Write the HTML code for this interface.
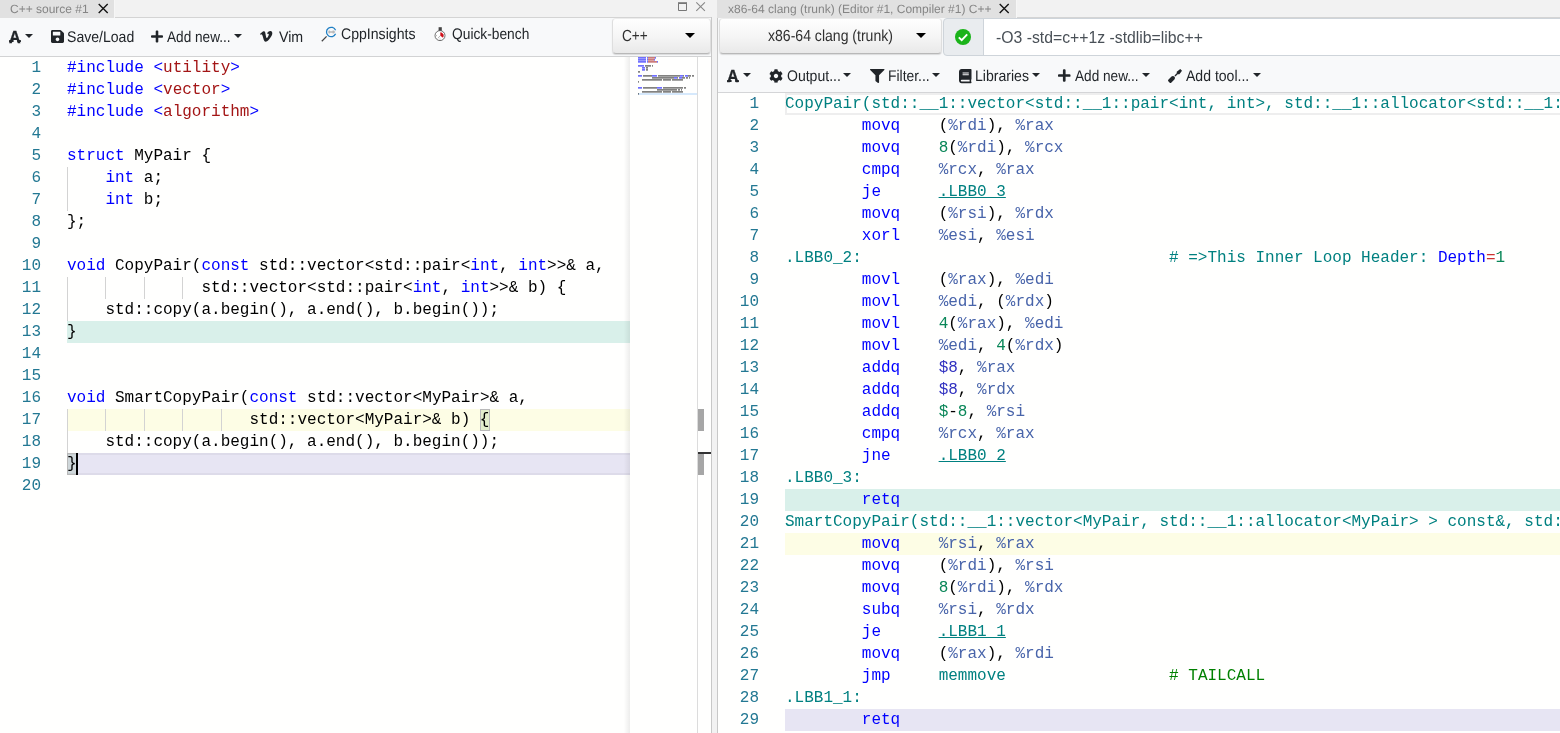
<!DOCTYPE html>
<html lang="en"><head><meta charset="utf-8"><title>Compiler Explorer</title>
<style>
*{box-sizing:border-box;margin:0;padding:0}
html,body{width:1560px;height:733px;overflow:hidden;background:#f2f2f2}
body{will-change:transform;font-family:"Liberation Sans",sans-serif;color:#212529;position:relative}
.abs{position:absolute}
svg{position:absolute;overflow:visible}
#lp{position:absolute;left:0;top:0;width:712px;height:733px;overflow:hidden}
#lp:after{content:"";position:absolute;left:711px;top:17px;width:1px;bottom:0;background:#c8c8c8}
#rp:before{content:"";position:absolute;left:-1px;top:18px;width:1px;bottom:0;background:#c8c8c8}
#rp{position:absolute;left:718px;top:0;width:842px;height:733px}
.hdr{position:absolute;left:0;top:0;right:0;height:18px;background:#f2f2f2}
.tab{position:absolute;left:0;top:0;height:18px;background:#e1e1e1;color:#858585;font-size:12px;line-height:18px;white-space:nowrap}
.hdr:after{content:"";position:absolute;left:0;right:0;top:17px;height:1px;background:#d4d4d4}
.tab{z-index:1;border-right:1px solid #f6f6f6}
.tab .tt{position:absolute;left:10px;top:-.4px;text-rendering:geometricPrecision}
.tb{position:absolute;left:0;right:0;background:#f8f9fa}
.lbl{position:absolute;white-space:nowrap;text-rendering:geometricPrecision;font-size:15.4px;line-height:20px;transform-origin:0 50%;color:#212529}
.caret{position:absolute;width:0;height:0;border-left:4px solid transparent;border-right:4px solid transparent;border-top:4.5px solid #212529}
.fa-a{position:absolute;font-family:"Liberation Sans",sans-serif;font-weight:bold;font-size:17.500px;line-height:20px;color:#212529;text-rendering:geometricPrecision;transform-origin:0 50%;transform:scaleX(.92);-webkit-text-stroke:.35px #212529}
.fa-a:before,.fa-a:after{content:"";position:absolute;top:13.900px;height:1.900px;width:4.800px;background:#212529;border-radius:.5px}
.fa-a:before{left:-.2px}.fa-a:after{left:8.700px}
.pick{position:absolute;border:1px solid #dedede;border-top-color:#ececec;border-bottom-color:#b8b8b8;border-radius:4px;background:linear-gradient(#fefefe,#f6f6f6 50%,#e9e9e9);box-shadow:0 1px 1px rgba(0,0,0,.12);font-size:14px;line-height:20px;color:#303030;white-space:nowrap}
.pick .caret{border-left-width:5.5px;border-right-width:5.5px;border-top:5.5px solid #000}
.pt{position:absolute;text-rendering:geometricPrecision;font-size:16px;line-height:20px;transform-origin:0 50%;white-space:nowrap}
.ed{position:absolute;left:0;right:0;bottom:0;background:#fffffe;overflow:hidden;font-family:"Liberation Mono",monospace;font-size:16px;line-height:22px}
.ln{position:absolute;left:0;text-align:right;color:#237893;height:22px;white-space:pre}
.cl{position:absolute;height:22px;white-space:pre;color:#000}
.ln{width:41px}
.cl{left:67px}
.k{color:#0000ff}.s{color:#a31515}.t{color:#008080}.r{color:#4864aa}.n{color:#098658}.c{color:#008000}.u{color:#008080;text-decoration:underline}.h{color:#3030c0}.e{color:#cd3131}
.hl{position:absolute;height:22px;left:67px;right:0}
.ig{position:absolute;width:1px;height:22px;background:#d3d3d3}
.cur{border:2px solid #eee}
</style></head><body>

<div id="lp">
 <div class="hdr">
  <div class="tab" style="width:115px"><span class="tt">C++ source #1</span>
   <svg style="left:97px;top:3px" width="12" height="12" viewBox="0 0 12 12"><path d="M1.700 1L10.700 10M10.700 1L1.700 10" stroke="#111" stroke-width="1.350" fill="none"/></svg>
  </div>
  <svg style="left:677px;top:1px" width="12" height="12" viewBox="0 0 12 12"><path d="M1.5 2.5H9.5V9.5H1.5Z" stroke="#777" stroke-width="1" fill="none"/><path d="M1 2H10" stroke="#777" stroke-width="1.6"/></svg>
  <svg style="left:694px;top:0px" width="14" height="14" viewBox="0 0 14 14"><path d="M2.300 2.300L10.900 10.900M10.900 2.300L2.300 10.900" stroke="#888" stroke-width="1.100" fill="none"/></svg>
 </div>
 <div class="tb" style="top:18px;height:39px;width:711px;border-bottom:1px solid #d2d3d4">
  <span class="fa-a" style="left:9px;top:8.600px">A</span>
  <i class="caret" style="left:25px;top:16px"></i>
  <svg style="left:51px;top:12px" width="13" height="13" viewBox="0 32 448 448"><path fill="#212529" d="M433.941 129.941l-83.882-83.882A48 48 0 0 0 316.118 32H48C21.49 32 0 53.49 0 80v352c0 26.51 21.49 48 48 48h352c26.51 0 48-21.49 48-48V163.882a48 48 0 0 0-14.059-33.941zM224 416c-35.346 0-64-28.654-64-64 0-35.346 28.654-64 64-64s64 28.654 64 64c0 35.346-28.654 64-64 64zm96-304.52V212c0 6.627-5.373 12-12 12H76c-6.627 0-12-5.373-12-12V108c0-6.627 5.373-12 12-12h228.52c3.183 0 6.235 1.264 8.485 3.515l3.48 3.48A11.996 11.996 0 0 1 320 111.48z"/></svg>
  <span class="lbl" style="left:67px;top:10px;transform:scaleX(0.914)">Save/Load</span>
  <svg style="left:151px;top:12px" width="12" height="13" viewBox="0 32 448 448"><path fill="#212529" d="M416 208H272V64c0-17.67-14.33-32-32-32h-32c-17.67 0-32 14.33-32 32v144H32c-17.67 0-32 14.33-32 32v32c0 17.67 14.33 32 32 32h144v144c0 17.67 14.33 32 32 32h32c17.67 0 32-14.33 32-32V304h144c17.67 0 32-14.33 32-32v-32c0-17.67-14.33-32-32-32z"/></svg>
  <span class="lbl" style="left:167px;top:10px;transform:scaleX(0.885)">Add new...</span>
  <i class="caret" style="left:234px;top:16px"></i>
  <svg style="left:259.500px;top:13px" width="12.300" height="11" viewBox="0 69 448 383"><path fill="#212529" d="M447.8 153.6c-2 43.6-32.4 103.3-91.4 179.1-60.900 79.200-112.400 118.800-154.600 118.800-26.100 0-48.200-24.100-66.300-72.300C100.300 250 85.300 174.300 56.200 174.300c-3.400 0-15.100 7.100-35.200 21.100L0 168.200c51.600-45.300 100.900-95.700 131.800-98.500 34.900-3.400 56.300 20.500 64.400 71.500 28.700 181.500 41.400 208.900 93.600 126.700 18.700-29.600 28.800-52.100 30.200-67.600 4.800-45.900-35.800-42.800-63.300-31 22-72.100 64.100-107.100 126.200-105.100 45.800 1.200 67.500 31.100 64.900 89.400z"/></svg>
  <span class="lbl" style="left:279px;top:10px;transform:scaleX(0.923)">Vim</span>
  <svg style="left:320.400px;top:7.400px" width="18" height="18" viewBox="0 0 18 18"><path d="M6.6 11.4L1.8 16.2" stroke="#444" stroke-width="1.3" fill="none"/><path d="M15.560 5.240A4.700 4.700 0 1 0 15.560 8.760" stroke="#1f7fc4" stroke-width="1.300" fill="none"/><path d="M9.200 5.600v2.800M13.200 5.600v2.800" stroke="#777" stroke-width=".8" fill="none"/><path d="M8.600 7h6.500" stroke="#bbb" stroke-width="1.600" fill="none"/></svg>
  <span class="lbl" style="left:341px;top:7px;transform:scaleX(0.916)">CppInsights</span>
  <svg style="left:432px;top:8px" width="16" height="16" viewBox="0 0 16 16"><rect x="6.600" y="1.200" width="3.200" height="3.800" fill="#444"/><circle cx="8" cy="9.600" r="5" fill="#fff" stroke="#333" stroke-width=".7"/><path d="M8.300 9.800V6.300A3.500 3.500 0 0 1 11 11.800Z" fill="#d1101a"/><path d="M8 9.800L6 12.300M4 9.600h1M8 13.600v-1M12 9.600h-.8" stroke="#666" stroke-width=".5"/></svg>
  <span class="lbl" style="left:452px;top:7px;transform:scaleX(0.895)">Quick-bench</span>
  <div class="pick" style="left:611.500px;top:0;width:99px;height:36px"><span class="pt" style="left:9.500px;top:7.500px;transform:scaleX(.852)">C++</span><i class="caret" style="left:72.500px;top:14px"></i></div>
 </div>
 <div class="ed" id="le" style="top:57px;width:711px">
  <div class="hl" style="top:264px;background:#d9f0ea;right:81px"></div>
  <div class="hl" style="top:352px;background:#fdfde5;right:81px"></div>
  <div class="hl" style="top:396px;background:#e7e5f3;right:81px;border-top:2px solid #dddbe9;border-bottom:2px solid #dddbe9"></div>
  <i class="ig" style="left:67px;top:110px"></i><i class="ig" style="left:67px;top:132px"></i><i class="ig" style="left:67px;top:220px"></i><i class="ig" style="left:105px;top:220px"></i><i class="ig" style="left:144px;top:220px"></i><i class="ig" style="left:182px;top:220px"></i><i class="ig" style="left:67px;top:242px"></i><i class="ig" style="left:67px;top:352px"></i><i class="ig" style="left:105px;top:352px"></i><i class="ig" style="left:144px;top:352px"></i><i class="ig" style="left:182px;top:352px"></i><i class="ig" style="left:221px;top:352px"></i><i class="ig" style="left:67px;top:374px"></i>
  <div class="abs" style="left:480px;top:352px;width:10px;height:22px;background:rgba(0,100,0,.1);border:1px solid #b9b9b9"></div>
  <div class="abs" style="left:67px;top:396px;width:10px;height:22px;background:rgba(0,100,0,.1);border:1px solid #b9b9b9"></div>
  <div class="abs" style="left:76px;top:396px;width:2px;height:22px;background:#000"></div>
<div class="ln" style="top:0px">1</div><div class="cl" style="top:0px"><span class="k">#include </span><span class="k">&lt;</span><span class="s">utility</span><span class="k">&gt;</span></div>
<div class="ln" style="top:22px">2</div><div class="cl" style="top:22px"><span class="k">#include </span><span class="k">&lt;</span><span class="s">vector</span><span class="k">&gt;</span></div>
<div class="ln" style="top:44px">3</div><div class="cl" style="top:44px"><span class="k">#include </span><span class="k">&lt;</span><span class="s">algorithm</span><span class="k">&gt;</span></div>
<div class="ln" style="top:66px">4</div><div class="cl" style="top:66px"></div>
<div class="ln" style="top:88px">5</div><div class="cl" style="top:88px"><span class="k">struct</span> MyPair {</div>
<div class="ln" style="top:110px">6</div><div class="cl" style="top:110px">    <span class="k">int</span> a;</div>
<div class="ln" style="top:132px">7</div><div class="cl" style="top:132px">    <span class="k">int</span> b;</div>
<div class="ln" style="top:154px">8</div><div class="cl" style="top:154px">};</div>
<div class="ln" style="top:176px">9</div><div class="cl" style="top:176px"></div>
<div class="ln" style="top:198px">10</div><div class="cl" style="top:198px"><span class="k">void</span> CopyPair(<span class="k">const</span> std::vector&lt;std::pair&lt;<span class="k">int</span>, <span class="k">int</span>&gt;&gt;&amp; a,</div>
<div class="ln" style="top:220px">11</div><div class="cl" style="top:220px">              std::vector&lt;std::pair&lt;<span class="k">int</span>, <span class="k">int</span>&gt;&gt;&amp; b) {</div>
<div class="ln" style="top:242px">12</div><div class="cl" style="top:242px">    std::copy(a.begin(), a.end(), b.begin());</div>
<div class="ln" style="top:264px">13</div><div class="cl" style="top:264px">}</div>
<div class="ln" style="top:286px">14</div><div class="cl" style="top:286px"></div>
<div class="ln" style="top:308px">15</div><div class="cl" style="top:308px"></div>
<div class="ln" style="top:330px">16</div><div class="cl" style="top:330px"><span class="k">void</span> SmartCopyPair(<span class="k">const</span> std::vector&lt;MyPair&gt;&amp; a,</div>
<div class="ln" style="top:352px">17</div><div class="cl" style="top:352px">                   std::vector&lt;MyPair&gt;&amp; b) {</div>
<div class="ln" style="top:374px">18</div><div class="cl" style="top:374px">    std::copy(a.begin(), a.end(), b.begin());</div>
<div class="ln" style="top:396px">19</div><div class="cl" style="top:396px">}</div>
<div class="ln" style="top:418px">20</div><div class="cl" style="top:418px"></div>
  <div class="abs" style="left:623px;top:0;width:7px;height:676px;background:linear-gradient(90deg,rgba(0,0,0,0) 10%,rgba(0,0,0,.07))"></div>
  <div class="abs" style="left:630px;top:0;width:67px;height:676px;background:#fffffe"></div>
  <svg style="left:638px;top:0" width="60" height="60" viewBox="0 0 60 60"><rect x="0" y="36" width="59" height="2" fill="#d6e9fc" shape-rendering="crispEdges"/><rect x="0" y="0.3" width="8" height="1.200" fill="#0000ff" opacity=".8"/><rect x="9" y="0.3" width="1" height="1.200" fill="#0000ff" opacity=".8"/><rect x="10" y="0.3" width="7" height="1.200" fill="#a31515" opacity=".8"/><rect x="17" y="0.3" width="1" height="1.200" fill="#0000ff" opacity=".8"/><rect x="0" y="2.3" width="8" height="1.200" fill="#0000ff" opacity=".8"/><rect x="9" y="2.3" width="1" height="1.200" fill="#0000ff" opacity=".8"/><rect x="10" y="2.3" width="6" height="1.200" fill="#a31515" opacity=".8"/><rect x="16" y="2.3" width="1" height="1.200" fill="#0000ff" opacity=".8"/><rect x="0" y="4.3" width="8" height="1.200" fill="#0000ff" opacity=".8"/><rect x="9" y="4.3" width="1" height="1.200" fill="#0000ff" opacity=".8"/><rect x="10" y="4.3" width="9" height="1.200" fill="#a31515" opacity=".8"/><rect x="19" y="4.3" width="1" height="1.200" fill="#0000ff" opacity=".8"/><rect x="0" y="8.3" width="6" height="1.200" fill="#0000ff" opacity=".8"/><rect x="7" y="8.3" width="6" height="1.200" fill="#000000" opacity=".7"/><rect x="14" y="8.3" width="1" height="1.200" fill="#000000" opacity=".7"/><rect x="4" y="10.3" width="3" height="1.200" fill="#0000ff" opacity=".8"/><rect x="8" y="10.3" width="2" height="1.200" fill="#000000" opacity=".7"/><rect x="4" y="12.3" width="3" height="1.200" fill="#0000ff" opacity=".8"/><rect x="8" y="12.3" width="2" height="1.200" fill="#000000" opacity=".7"/><rect x="0" y="14.3" width="2" height="1.200" fill="#000000" opacity=".7"/><rect x="0" y="18.3" width="4" height="1.200" fill="#0000ff" opacity=".8"/><rect x="5" y="18.3" width="9" height="1.200" fill="#000000" opacity=".7"/><rect x="14" y="18.3" width="5" height="1.200" fill="#0000ff" opacity=".8"/><rect x="20" y="18.3" width="22" height="1.200" fill="#000000" opacity=".7"/><rect x="42" y="18.3" width="3" height="1.200" fill="#0000ff" opacity=".8"/><rect x="45" y="18.3" width="1" height="1.200" fill="#000000" opacity=".7"/><rect x="47" y="18.3" width="3" height="1.200" fill="#0000ff" opacity=".8"/><rect x="50" y="18.3" width="3" height="1.200" fill="#000000" opacity=".7"/><rect x="54" y="18.3" width="2" height="1.200" fill="#000000" opacity=".7"/><rect x="14" y="20.3" width="22" height="1.200" fill="#000000" opacity=".7"/><rect x="36" y="20.3" width="3" height="1.200" fill="#0000ff" opacity=".8"/><rect x="39" y="20.3" width="1" height="1.200" fill="#000000" opacity=".7"/><rect x="41" y="20.3" width="3" height="1.200" fill="#0000ff" opacity=".8"/><rect x="44" y="20.3" width="3" height="1.200" fill="#000000" opacity=".7"/><rect x="48" y="20.3" width="2" height="1.200" fill="#000000" opacity=".7"/><rect x="51" y="20.3" width="1" height="1.200" fill="#000000" opacity=".7"/><rect x="4" y="22.3" width="20" height="1.200" fill="#000000" opacity=".7"/><rect x="25" y="22.3" width="8" height="1.200" fill="#000000" opacity=".7"/><rect x="34" y="22.3" width="11" height="1.200" fill="#000000" opacity=".7"/><rect x="0" y="24.3" width="1" height="1.200" fill="#000000" opacity=".7"/><rect x="0" y="30.3" width="4" height="1.200" fill="#0000ff" opacity=".8"/><rect x="5" y="30.3" width="14" height="1.200" fill="#000000" opacity=".7"/><rect x="19" y="30.3" width="5" height="1.200" fill="#0000ff" opacity=".8"/><rect x="25" y="30.3" width="20" height="1.200" fill="#000000" opacity=".7"/><rect x="46" y="30.3" width="2" height="1.200" fill="#000000" opacity=".7"/><rect x="19" y="32.3" width="20" height="1.200" fill="#000000" opacity=".7"/><rect x="40" y="32.3" width="2" height="1.200" fill="#000000" opacity=".7"/><rect x="43" y="32.3" width="1" height="1.200" fill="#000000" opacity=".7"/><rect x="4" y="34.3" width="20" height="1.200" fill="#000000" opacity=".7"/><rect x="25" y="34.3" width="8" height="1.200" fill="#000000" opacity=".7"/><rect x="34" y="34.3" width="11" height="1.200" fill="#000000" opacity=".7"/><rect x="0" y="36.3" width="1" height="1.200" fill="#000000" opacity=".7"/></svg>
  <div class="abs" style="left:697px;top:0;width:1px;height:676px;background:#dcdcdc"></div>
  <div class="abs" style="left:698px;top:352px;width:6px;height:22px;background:#a6a6a6"></div>
  <div class="abs" style="left:698px;top:396px;width:6px;height:22px;background:#a6a6a6"></div>
  <div class="abs" style="left:698px;top:395px;width:13px;height:2px;background:#333"></div>
 </div>
</div>

<div id="rp">
 <div class="hdr">
  <div class="tab" style="left:-1px;width:300px"><span class="tt" style="left:11px">x86-64 clang (trunk) (Editor #1, Compiler #1) C++</span>
   <svg style="left:281px;top:3px" width="12" height="12" viewBox="0 0 12 12"><path d="M1.700 1L10.700 10M10.700 1L1.700 10" stroke="#111" stroke-width="1.350" fill="none"/></svg>
  </div>
 </div>
 <div class="tb" style="top:18px;height:75px;border-bottom:1px solid #d4d5d7">
  <div class="pick" style="left:1px;top:0;width:223px;height:36px"><span class="pt" style="left:48px;top:7.500px;transform:scaleX(.878)">x86-64 clang (trunk)</span><i class="caret" style="left:196px;top:14px"></i></div>
  <div class="abs" style="left:225px;top:0;width:41px;height:38px;background:#e9ecef;border:1px solid #ced4da;border-radius:4px 0 0 4px">
   <svg style="left:11px;top:10px" width="16" height="16" viewBox="0 0 16 16"><circle cx="8" cy="8" r="8" fill="#1ab31a"/><path d="M3.800 8.300L6.700 11.200L12.200 5.400" stroke="#fff" stroke-width="1.900" fill="none"/></svg>
  </div>
  <div class="abs" style="left:265px;top:0;right:0;height:38px;background:#fff;border:1px solid #ced4da;border-right:0"><span class="abs" style="left:11.600px;top:7.700px;font-size:16.500px;line-height:20px;color:#495057;white-space:nowrap;transform-origin:0 50%;transform:scaleX(.956)">-O3 -std=c++1z -stdlib=libc++</span></div>

  <span class="fa-a" style="left:9px;top:47.900px">A</span>
  <i class="caret" style="left:25px;top:55px"></i>
  <svg style="left:51px;top:51px" width="14" height="14" viewBox="0 0 512 512"><path fill="#212529" d="M487.4 315.7l-42.6-24.6c4.3-23.2 4.3-47 0-70.200l42.600-24.600c4.900-2.800 7.100-8.600 5.500-14-11.100-35.600-30-67.800-54.700-94.600-3.800-4.100-10-5.100-14.800-2.300L380.800 110c-17.900-15.400-38.500-27.300-60.800-35.100V25.800c0-5.600-3.900-10.500-9.400-11.700-36.700-8.200-74.300-7.800-109.200 0-5.500 1.200-9.400 6.100-9.400 11.700V75c-22.200 7.900-42.800 19.800-60.800 35.100L88.700 85.500c-4.900-2.800-11-1.900-14.800 2.300-24.700 26.700-43.600 58.900-54.700 94.600-1.700 5.400.6 11.200 5.500 14L67.300 221c-4.300 23.200-4.300 47 0 70.200l-42.600 24.600c-4.900 2.800-7.100 8.600-5.500 14 11.100 35.600 30 67.800 54.700 94.600 3.800 4.100 10 5.100 14.800 2.300l42.600-24.600c17.900 15.400 38.500 27.300 60.800 35.100v49.200c0 5.600 3.900 10.500 9.400 11.700 36.700 8.200 74.300 7.800 109.200 0 5.500-1.200 9.400-6.100 9.400-11.700v-49.200c22.200-7.900 42.800-19.800 60.800-35.100l42.600 24.600c4.900 2.800 11 1.900 14.800-2.300 24.700-26.700 43.600-58.900 54.700-94.600 1.500-5.500-.7-11.300-5.600-14.100zM256 336c-44.100 0-80-35.900-80-80s35.900-80 80-80 80 35.900 80 80-35.900 80-80 80z"/></svg>
  <span class="lbl" style="left:69px;top:49px;transform:scaleX(0.912)">Output...</span>
  <i class="caret" style="left:125px;top:55px"></i>
  <svg style="left:152px;top:51px" width="14.5" height="14" viewBox="0 0 512 512" preserveAspectRatio="none"><path fill="#212529" d="M487.976 0H24.028C2.71 0-8.047 25.866 7.058 40.971L192 225.941V432c0 7.831 3.821 15.170 10.237 19.662l80 55.980C298.020 518.690 320 507.493 320 487.980V225.941l184.947-184.970C520.021 25.896 509.338 0 487.976 0z"/></svg>
  <span class="lbl" style="left:170px;top:49px;transform:scaleX(0.902)">Filter...</span>
  <i class="caret" style="left:214px;top:55px"></i>
  <svg style="left:240.500px;top:50.500px" width="12.500" height="14.300" viewBox="0 0 448 512"><path fill="#212529" d="M448 360V24c0-13.300-10.700-24-24-24H96C43 0 0 43 0 96v320c0 53 43 96 96 96h328c13.300 0 24-10.700 24-24v-16c0-7.500-3.500-14.300-8.900-18.700-4.200-15.400-4.200-59.300 0-74.700 5.400-4.300 8.900-11.100 8.900-18.600zM128 134c0-3.300 2.700-6 6-6h212c3.300 0 6 2.700 6 6v20c0 3.300-2.700 6-6 6H134c-3.300 0-6-2.700-6-6v-20zm0 64c0-3.300 2.700-6 6-6h212c3.300 0 6 2.700 6 6v20c0 3.300-2.700 6-6 6H134c-3.300 0-6-2.700-6-6v-20zm253.400 250H96c-17.700 0-32-14.300-32-32 0-17.600 14.400-32 32-32h285.400c-1.900 17.100-1.900 46.900 0 64z"/></svg>
  <span class="lbl" style="left:257px;top:49px;transform:scaleX(0.914)">Libraries</span>
  <i class="caret" style="left:313.500px;top:55px"></i>
  <svg style="left:340px;top:51px" width="12.500" height="13" viewBox="0 32 448 448"><path fill="#212529" d="M416 208H272V64c0-17.670-14.330-32-32-32h-32c-17.670 0-32 14.330-32 32v144H32c-17.670 0-32 14.330-32 32v32c0 17.670 14.330 32 32 32h144v144c0 17.670 14.330 32 32 32h32c17.670 0 32-14.330 32-32V304h144c17.670 0 32-14.330 32-32v-32c0-17.670-14.330-32-32-32z"/></svg>
  <span class="lbl" style="left:356.500px;top:49px;transform:scaleX(0.885)">Add new...</span>
  <i class="caret" style="left:424px;top:55px"></i>
  <svg style="left:450px;top:51px" width="14" height="14" viewBox="0 0 512 512"><path fill="#212529" d="M448 0L320 96v62.060l-83.030 83.030c6.790 4.250 13.270 9.060 19.070 14.870 5.800 5.800 10.620 12.280 14.870 19.070L353.940 192H416l96-128-64-64zM128 278.590L10.920 395.670c-14.550 14.550-14.550 38.150 0 52.710l52.700 52.700c14.560 14.560 38.150 14.560 52.710 0L233.410 384c29.110-29.110 29.110-76.300 0-105.410s-76.300-29.110-105.410 0z"/></svg>
  <span class="lbl" style="left:468px;top:49px;transform:scaleX(0.913)">Add tool...</span>
  <i class="caret" style="left:534.500px;top:55px"></i>
 </div>
 <div class="ed" id="re" style="top:93px">
  <div class="hl cur" style="top:0;right:-4px"></div>
  <div class="hl" style="top:396px;background:#d9f0ea"></div>
  <div class="hl" style="top:440px;background:#fdfde5"></div>
  <div class="hl" style="top:616px;background:#e7e5f3"></div>
<div class="ln" style="top:0px">1</div><div class="cl" style="top:0px"><span class="t">CopyPair(std::__1::vector&lt;std::__1::pair&lt;int, int&gt;, std::__1::allocator&lt;std::__1::pair&lt;int, int&gt; &gt; &gt; const&amp;, std::__1::vector</span></div>
<div class="ln" style="top:22px">2</div><div class="cl" style="top:22px">        <span class="k">movq    </span>(<span class="r">%rdi</span>), <span class="r">%rax</span></div>
<div class="ln" style="top:44px">3</div><div class="cl" style="top:44px">        <span class="k">movq    </span><span class="n">8</span>(<span class="r">%rdi</span>), <span class="r">%rcx</span></div>
<div class="ln" style="top:66px">4</div><div class="cl" style="top:66px">        <span class="k">cmpq    </span><span class="r">%rcx</span>, <span class="r">%rax</span></div>
<div class="ln" style="top:88px">5</div><div class="cl" style="top:88px">        <span class="k">je      </span><span class="u">.LBB0_3</span></div>
<div class="ln" style="top:110px">6</div><div class="cl" style="top:110px">        <span class="k">movq    </span>(<span class="r">%rsi</span>), <span class="r">%rdx</span></div>
<div class="ln" style="top:132px">7</div><div class="cl" style="top:132px">        <span class="k">xorl    </span><span class="r">%esi</span>, <span class="r">%esi</span></div>
<div class="ln" style="top:154px">8</div><div class="cl" style="top:154px"><span class="t">.LBB0_2:</span>                                <span class="t"># =&gt;This Inner Loop Header: </span><span class="k">Depth</span><span class="e">=</span><span class="n">1</span></div>
<div class="ln" style="top:176px">9</div><div class="cl" style="top:176px">        <span class="k">movl    </span>(<span class="r">%rax</span>), <span class="r">%edi</span></div>
<div class="ln" style="top:198px">10</div><div class="cl" style="top:198px">        <span class="k">movl    </span><span class="r">%edi</span>, (<span class="r">%rdx</span>)</div>
<div class="ln" style="top:220px">11</div><div class="cl" style="top:220px">        <span class="k">movl    </span><span class="n">4</span>(<span class="r">%rax</span>), <span class="r">%edi</span></div>
<div class="ln" style="top:242px">12</div><div class="cl" style="top:242px">        <span class="k">movl    </span><span class="r">%edi</span>, <span class="n">4</span>(<span class="r">%rdx</span>)</div>
<div class="ln" style="top:264px">13</div><div class="cl" style="top:264px">        <span class="k">addq    </span><span class="h">$8</span>, <span class="r">%rax</span></div>
<div class="ln" style="top:286px">14</div><div class="cl" style="top:286px">        <span class="k">addq    </span><span class="h">$8</span>, <span class="r">%rdx</span></div>
<div class="ln" style="top:308px">15</div><div class="cl" style="top:308px">        <span class="k">addq    </span><span class="n">$</span>-<span class="n">8</span>, <span class="r">%rsi</span></div>
<div class="ln" style="top:330px">16</div><div class="cl" style="top:330px">        <span class="k">cmpq    </span><span class="r">%rcx</span>, <span class="r">%rax</span></div>
<div class="ln" style="top:352px">17</div><div class="cl" style="top:352px">        <span class="k">jne     </span><span class="u">.LBB0_2</span></div>
<div class="ln" style="top:374px">18</div><div class="cl" style="top:374px"><span class="t">.LBB0_3:</span></div>
<div class="ln" style="top:396px">19</div><div class="cl" style="top:396px">        <span class="k">retq</span></div>
<div class="ln" style="top:418px">20</div><div class="cl" style="top:418px"><span class="t">SmartCopyPair(std::__1::vector&lt;MyPair, std::__1::allocator&lt;MyPair&gt; &gt; const&amp;, std::__1::vector&lt;MyPair, std::__1::allocator&lt;MyPair&gt; &gt;&amp;)</span></div>
<div class="ln" style="top:440px">21</div><div class="cl" style="top:440px">        <span class="k">movq    </span><span class="r">%rsi</span>, <span class="r">%rax</span></div>
<div class="ln" style="top:462px">22</div><div class="cl" style="top:462px">        <span class="k">movq    </span>(<span class="r">%rdi</span>), <span class="r">%rsi</span></div>
<div class="ln" style="top:484px">23</div><div class="cl" style="top:484px">        <span class="k">movq    </span><span class="n">8</span>(<span class="r">%rdi</span>), <span class="r">%rdx</span></div>
<div class="ln" style="top:506px">24</div><div class="cl" style="top:506px">        <span class="k">subq    </span><span class="r">%rsi</span>, <span class="r">%rdx</span></div>
<div class="ln" style="top:528px">25</div><div class="cl" style="top:528px">        <span class="k">je      </span><span class="u">.LBB1_1</span></div>
<div class="ln" style="top:550px">26</div><div class="cl" style="top:550px">        <span class="k">movq    </span>(<span class="r">%rax</span>), <span class="r">%rdi</span></div>
<div class="ln" style="top:572px">27</div><div class="cl" style="top:572px">        <span class="k">jmp     </span><span class="t">memmove</span>                 <span class="c"># TAILCALL</span></div>
<div class="ln" style="top:594px">28</div><div class="cl" style="top:594px"><span class="t">.LBB1_1:</span></div>
<div class="ln" style="top:616px">29</div><div class="cl" style="top:616px">        <span class="k">retq</span></div>
 </div>
</div>
</body></html>
